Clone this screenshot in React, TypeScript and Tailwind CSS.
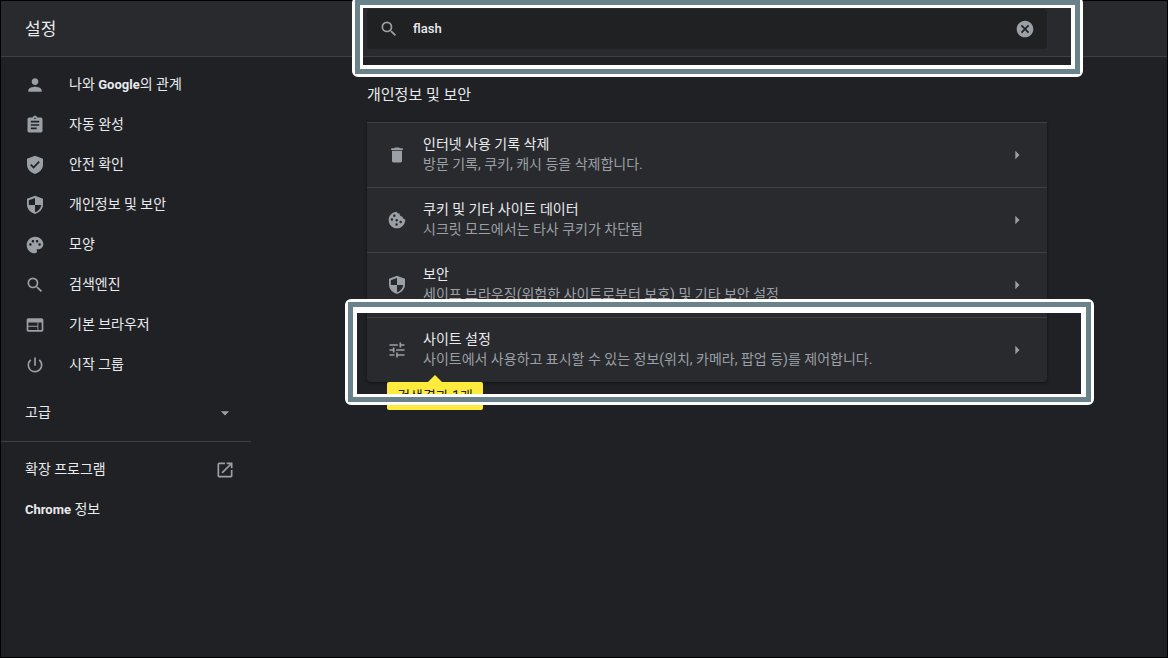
import type { ReactNode } from "react";
import {
  MdArrowDropDown,
  MdArrowRight,
  MdAssignment,
  MdCancel,
  MdDelete,
  MdOpenInNew,
  MdPalette,
  MdPerson,
  MdPowerSettingsNew,
  MdSearch,
  MdTune,
  MdWeb,
} from "react-icons/md";

function ShieldCheckIcon() {
  return (
    <svg viewBox="0 0 24 24" width={20} height={20} fill="currentColor" aria-hidden="true">
      <path
        fillRule="evenodd"
        d="M12 1L2.400 4.600v6.900c0 5.400 4 9.700 9.600 11.300 5.600-1.600 9.600-5.900 9.600-11.300V4.600L12 1zM10.300 16.400l-4.100-4.100 1.500-1.500 2.600 2.600 6-6.100 1.500 1.500-7.500 7.600z"
      />
    </svg>
  );
}

function ShieldIcon() {
  return (
    <svg viewBox="0 0 24 24" width={20} height={20} fill="currentColor" aria-hidden="true">
      <path
        fillRule="evenodd"
        d="M12 1L2.400 4.600v6.900c0 5.400 4 9.700 9.600 11.300 5.600-1.600 9.600-5.900 9.600-11.300V4.600L12 1zM12 3.500V12h7.400c-.4 4.300-3.300 7.400-7.400 8.700V12H4.600V6.300L12 3.500z"
      />
    </svg>
  );
}

function CookieIcon() {
  return (
    <svg viewBox="0 0 24 24" width={20} height={20} fill="currentColor" aria-hidden="true">
      <path
        fillRule="evenodd"
        d="M21.900 11.100c-1.900 0-3.200-1.300-3.100-3.100-2.300.3-4-1.600-3.500-3.700-2 .2-3.400-1-3.500-2.300C6.300 2 2 6.500 2 12s4.500 10 10 10 10-4.500 9.900-10.900zM8.800 5.500a1.500 1.500 0 1 1 0 3 1.500 1.500 0 0 1 0-3zM5.900 9.900a1.500 1.500 0 1 1 0 3 1.500 1.500 0 0 1 0-3zM11.600 10.900a1.500 1.500 0 1 1 0 3 1.500 1.500 0 0 1 0-3zM11.500 16a1.500 1.500 0 1 1 0 3 1.500 1.500 0 0 1 0-3zM16.400 13a1.500 1.500 0 1 1 0 3 1.500 1.500 0 0 1 0-3z"
      />
    </svg>
  );
}

const menuItems: { label: ReactNode; icon: ReactNode }[] = [
  {
    label: (
      <>
        나와 <b className="text-[13px] font-bold">Google</b>의 관계
      </>
    ),
    icon: <MdPerson size={20} />,
  },
  { label: "자동 완성", icon: <MdAssignment size={20} /> },
  { label: "안전 확인", icon: <ShieldCheckIcon /> },
  { label: "개인정보 및 보안", icon: <ShieldIcon /> },
  { label: "모양", icon: <MdPalette size={20} /> },
  { label: "검색엔진", icon: <MdSearch size={20} /> },
  { label: "기본 브라우저", icon: <MdWeb size={20} /> },
  { label: "시작 그룹", icon: <MdPowerSettingsNew size={20} /> },
];

const privacyRows = [
  {
    title: "인터넷 사용 기록 삭제",
    detail: "방문 기록, 쿠키, 캐시 등을 삭제합니다.",
    icon: <MdDelete size={20} />,
  },
  {
    title: "쿠키 및 기타 사이트 데이터",
    detail: "시크릿 모드에서는 타사 쿠키가 차단됨",
    icon: <CookieIcon />,
  },
  {
    title: "보안",
    detail: "세이프 브라우징(위험한 사이트로부터 보호) 및 기타 보안 설정",
    icon: <ShieldIcon />,
  },
  {
    title: "사이트 설정",
    detail: "사이트에서 사용하고 표시할 수 있는 정보(위치, 카메라, 팝업 등)를 제어합니다.",
    icon: <MdTune size={20} />,
    result: "검색결과 1개",
  },
];

// White / teal / white outline laid over a highlighted area
function Highlight({ className, inner }: { className: string; inner: string }) {
  return (
    <div className={`pointer-events-none absolute z-10 rounded-md border-[3px] border-white ${className}`}>
      <div className="h-full border-[5px] border-[#6a838b] bg-clip-padding">
        <div className={`h-full border-white ${inner}`} />
      </div>
    </div>
  );
}

function Sidebar() {
  return (
    <nav className="py-2">
      <ul>
        {menuItems.map((item, index) => (
          <li key={index}>
            <a href="#" className="flex h-10 items-center gap-6 pl-6">
              <span className="text-[#9aa0a6]">{item.icon}</span>
              <span className="pb-0.5">{item.label}</span>
            </a>
          </li>
        ))}
      </ul>
      <button type="button" className="mt-2 flex h-10 w-full items-center justify-between pr-4 pl-6">
        <span className="pb-0.5">고급</span>
        <MdArrowDropDown size={20} className="text-[#9aa0a6]" />
      </button>
      <div className="my-2 border-t border-[#3f4042]" />
      <a href="#" className="flex h-10 items-center justify-between pr-4 pl-6">
        <span className="pb-0.5">확장 프로그램</span>
        <MdOpenInNew size={20} className="text-[#9aa0a6]" />
      </a>
      <a href="#" className="flex h-10 items-center pl-6">
        <span className="pb-0.5">
          <b className="text-[13px] font-bold">Chrome</b> 정보
        </span>
      </a>
    </nav>
  );
}

export default function App() {
  return (
    <div className="min-h-screen border border-black bg-[#202124] font-['Roboto','Noto_Sans_CJK_KR',sans-serif] text-sm leading-5 text-[#e8eaed]">
      <header className="grid h-14 grid-cols-[250px_minmax(0,1fr)] items-center border-b border-[#3f4042] bg-[#292a2d]">
        <h1 className="pl-6 text-[17px]">설정</h1>
        <div className="pr-30 pl-29">
          <div className="relative flex h-10 items-center rounded-sm bg-[#202123] px-3">
            <MdSearch size={20} className="text-[#9aa0a6]" />
            <input
              aria-label="설정 검색"
              className="ml-3.5 min-w-0 flex-1 bg-transparent text-[13px] font-medium outline-none"
              defaultValue="flash"
              type="text"
            />
            <button type="button" aria-label="검색어 지우기" className="text-[#9aa0a6]">
              <MdCancel size={20} />
            </button>
            <Highlight
              className="-top-3 -right-9 -bottom-7 -left-[15px]"
              inner="border-t-[3px] border-r-4 border-b-4 border-l-[3px]"
            />
          </div>
        </div>
      </header>

      <div className="grid grid-cols-[250px_minmax(0,1fr)]">
        <Sidebar />
        <main className="pr-30 pl-29">
          <h2 className="flex h-[65px] items-center pt-2.5 text-[15px]">개인정보 및 보안</h2>
          <section className="rounded-b-sm bg-[#292a2d] shadow-[0_1px_3px_rgba(0,0,0,0.5)]">
            {privacyRows.map((row) => (
              <div key={row.title} className="relative border-t border-[#3f4042]">
                <button type="button" className="flex h-16 w-full items-center px-5 text-left">
                  <span className="text-[#9aa0a6]">{row.icon}</span>
                  <span className="ml-4 flex-1 pb-0.5">
                    <span className="block">{row.title}</span>
                    <span className="block text-[#9aa0a6]">{row.detail}</span>
                  </span>
                  <MdArrowRight size={20} className="text-[#9aa0a6]" />
                </button>
                {row.result ? (
                  <>
                    <div className="absolute top-full left-5 flex h-7 w-24 justify-center rounded-xs bg-[#ffeb3b] pt-1 text-[#202124]">
                      <svg viewBox="0 0 14 7" className="absolute bottom-full h-[7px] w-3.5" fill="#ffeb3b" aria-hidden="true">
                        <path d="M0 7L7 0l7 7z" />
                      </svg>
                      {row.result}
                    </div>
                    <Highlight
                      className="-top-[19px] -right-[47px] -bottom-[23px] -left-[22px]"
                      inner="border-t-[6px] border-r-[5px] border-b-[3px] border-l-4"
                    />
                  </>
                ) : null}
              </div>
            ))}
          </section>
        </main>
      </div>
    </div>
  );
}
